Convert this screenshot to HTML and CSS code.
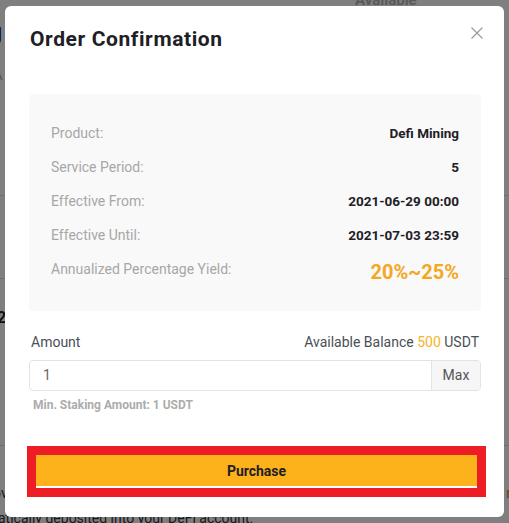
FILE: index.html
```html
<!DOCTYPE html>
<html lang="en">
<head>
<meta charset="utf-8">
<title>Order Confirmation</title>
<link rel="stylesheet" href="styles.css">
</head>
<body>
<div class="page">
  <div class="bg-avail">Available</div>
  <div class="bg-title">U</div>
  <div class="bg-sub">A</div>
  <div class="bg-rule r1"></div>
  <div class="bg-rule r2"></div>
  <div class="bg-num">2</div>
  <div class="bg-rule r3"></div>
  <div class="bg-note"><span class="bg-ov">ov</span><span class="bg-link">n</span></div>
  <div class="bg-note2">atically deposited into your DeFi account.</div>
</div>
<div class="overlay">
  <div class="modal">
    <div class="head">
      <div class="title">Order Confirmation</div>
      <svg class="close" viewBox="0 0 12 12" width="12" height="12"><path d="M0.5 0.5L11.5 11.5M11.5 0.5L0.5 11.5" stroke="#9a9a9a" stroke-width="1.2" fill="none"/></svg>
    </div>
    <div class="info">
      <div class="row"><span class="label">Product:</span><span class="val">Defi Mining</span></div>
      <div class="row"><span class="label">Service Period:</span><span class="val">5</span></div>
      <div class="row"><span class="label">Effective From:</span><span class="val">2021-06-29 00:00</span></div>
      <div class="row"><span class="label">Effective Until:</span><span class="val">2021-07-03 23:59</span></div>
      <div class="row apy-row"><span class="label">Annualized Percentage Yield:</span><span class="apy">20%~25%</span></div>
    </div>
    <div class="amount-row"><span>Amount</span><span>Available Balance <span class="hl">500</span> USDT</span></div>
    <div class="input"><span class="input-val">1</span><span class="max">Max</span></div>
    <div class="min">Min. Staking Amount: 1 USDT</div>
    <div class="red">
      <div class="btn">Purchase</div>
    </div>
  </div>
</div>
</body>
</html>
```
FILE: styles.css
```css
html, body {
  margin: 0;
  padding: 0;
}
body {
  width: 509px;
  height: 523px;
  overflow: hidden;
  position: relative;
  background: #fff;
  font-family: Roboto, "Liberation Sans", Arial, sans-serif;
  color: #1e2026;
}

/* background page */
.page {
  height: 523px;
  overflow: hidden;
}
.bg-avail {
  margin-top: -8px;
  height: 16px;
  line-height: 16px;
  font-size: 15px;
  font-weight: 700;
  color: #b4b4b4;
  padding-left: 355px;
}
.bg-title {
  height: 58px;
  line-height: 58px;
  font-size: 26px;
  font-weight: 700;
  color: #000;
  margin-left: -15px;
}
.bg-sub {
  height: 20px;
  line-height: 20px;
  font-size: 13px;
  color: #aaa;
  margin-left: -6px;
}
.bg-rule {
  height: 1px;
  background: #dedede;
}
.r1 { margin-top: 109px; }
.r2 { margin-top: 82px; }
.r3 { margin-top: 117px; }
.bg-num {
  margin-top: 29px;
  height: 20px;
  line-height: 20px;
  font-size: 16px;
  font-weight: 700;
  color: #222;
  margin-left: -3px;
}
.bg-note {
  margin-top: 37px;
  height: 20px;
  line-height: 20px;
  font-size: 14px;
  color: #333;
  display: flex;
  justify-content: space-between;
  margin-left: -7px;
  margin-right: -5px;
}
.bg-link { color: #c08a10; }
.bg-note2 {
  margin-top: 5px;
  height: 20px;
  line-height: 20px;
  font-size: 14px;
  color: #333;
  margin-left: -2px;
  white-space: nowrap;
}

/* overlay + modal */
.overlay {
  position: absolute;
  inset: 0;
  background: rgba(0, 0, 0, 0.5);
  padding: 6px 5px;
}
.modal {
  background: #fff;
  border-radius: 6px;
  padding: 19px 23px 20px 24px;
  display: flex;
  flex-direction: column;
}
.head {
  display: flex;
  justify-content: space-between;
  align-items: flex-start;
}
.title {
  font-size: 21px;
  font-weight: 700;
  line-height: 28px;
  letter-spacing: 0.6px;
  color: #1e2026;
  margin-left: 1px;
}
.close {
  margin-top: 2px;
  margin-right: -2px;
}
.info {
  margin-top: 41px;
  background: #f9f9f9;
  border-radius: 4px;
  padding: 22px 22px 19px;
}
.row {
  display: flex;
  justify-content: space-between;
  align-items: flex-start;
  height: 34px;
  line-height: 34px;
}
.label {
  font-size: 14px;
  color: #a7a7a7;
}
.val {
  font-size: 13.5px;
  font-weight: 700;
  color: #1e2026;
}
.apy-row {
  height: 40px;
}
.apy {
  font-size: 20px;
  line-height: 40px;
  font-weight: 700;
  color: #f3a722;
}
.amount-row {
  margin-top: 21px;
  display: flex;
  justify-content: space-between;
  line-height: 20px;
  font-size: 14px;
  color: #4a4f57;
  padding: 0 2px;
}
.hl { color: #f7b32b; }
.input {
  margin-top: 8px;
  height: 31px;
  box-sizing: border-box;
  border: 1px solid #e3e3e3;
  border-radius: 4px;
  display: flex;
  overflow: hidden;
  font-size: 14px;
}
.input-val {
  flex: 1;
  padding-left: 13px;
  line-height: 29px;
  color: #666;
}
.max {
  width: 48px;
  border-left: 1px solid #e3e3e3;
  background: #f6f6f6;
  text-align: center;
  line-height: 29px;
  color: #555;
}
.min {
  margin-top: 6px;
  font-size: 12px;
  font-weight: 700;
  line-height: 16px;
  color: #acacac;
  padding-left: 4px;
}
.red {
  margin-top: 33px;
  margin-left: -2px;
  margin-right: -5px;
  background: #ee1c25;
  padding: 9px;
}
.btn {
  height: 31px;
  background: #fdb11a;
  border-bottom: 2px solid #fff;
  display: flex;
  align-items: center;
  justify-content: center;
  font-size: 14px;
  font-weight: 700;
  color: #1e2026;
}
```
